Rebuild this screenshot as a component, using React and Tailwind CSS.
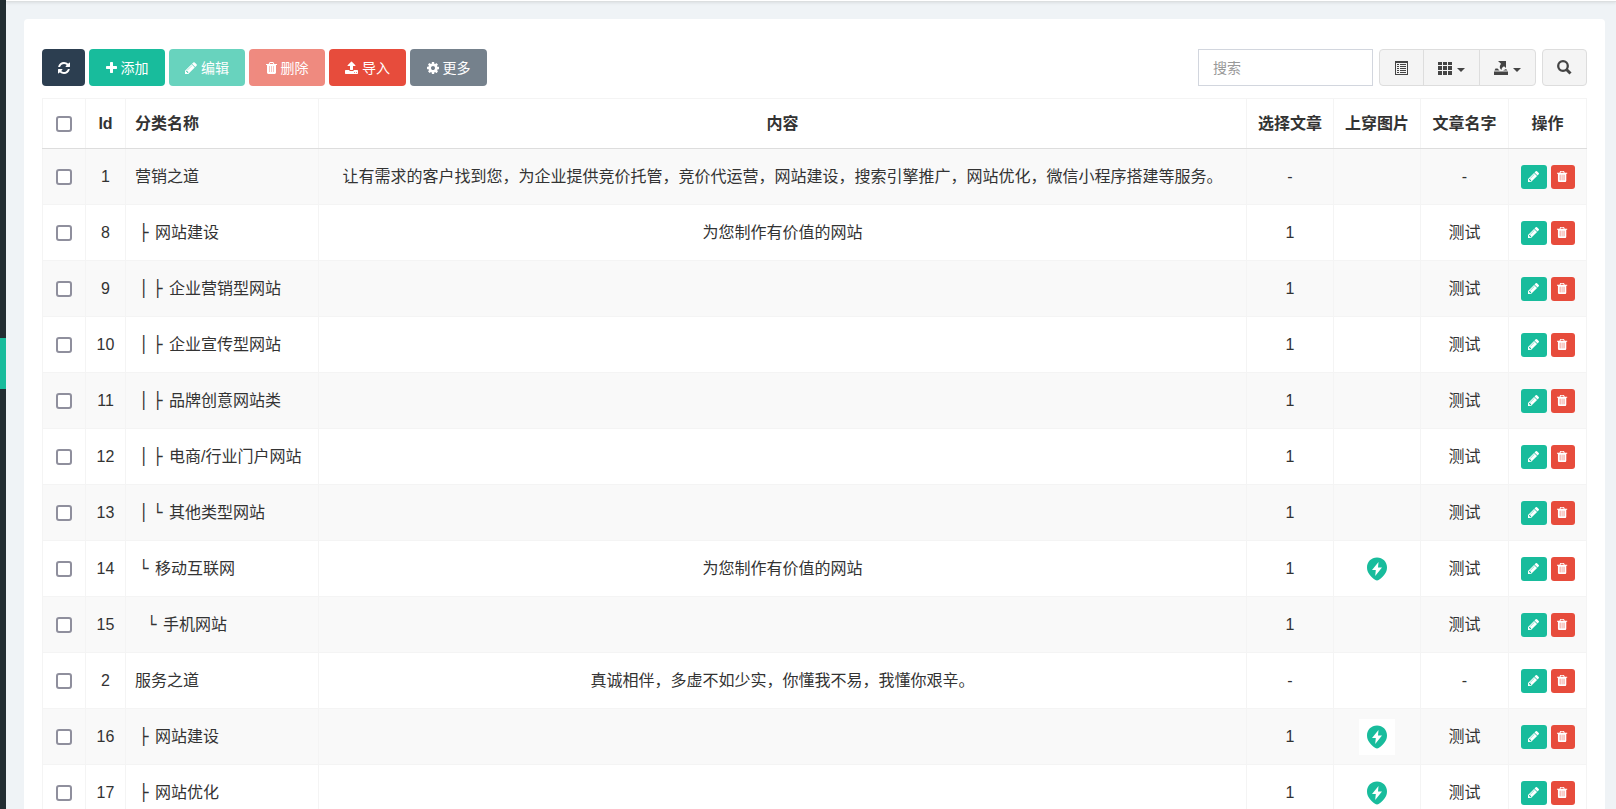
import React from 'react';

// [left edge, advance, path] on a 1792 unit grid
const icons = {
    refresh: [128, 1536, 'M1639 1056q0 5-1 7-64 268-268 434.5t-478 166.5q-146 0-282.5-55t-243.5-157l-129 129q-19 19-45 19t-45-19-19-45v-448q0-26 19-45t45-19h448q26 0 45 19t19 45-19 45l-137 137q71 66 161 102t187 36q134 0 250-65t186-179q11-17 53-117 8-23 30-23h192q13 0 22.5 9.5t9.5 22.5zm25-800v448q0 26-19 45t-45 19h-448q-26 0-45-19t-19-45 19-45l138-138q-148-137-349-137-134 0-250 65t-186 179q-11 17-53 117-8 23-30 23h-199q-13 0-22.5-9.5t-9.5-22.5v-7q65-268 270-434.5t480-166.5q146 0 284 55.5t245 156.5l130-129q19-19 45-19t45 19 19 45z'],
    plus: [192, 1408, 'M1600 736v192q0 40-28 68t-68 28h-416v416q0 40-28 68t-68 28h-192q-40 0-68-28t-28-68v-416h-416q-40 0-68-28t-28-68v-192q0-40 28-68t68-28h416v-416q0-40 28-68t68-28h192q40 0 68 28t28 68v416h416q40 0 68 28t28 68z'],
    pencil: [128, 1536, 'M491 1536l91-91-235-235-91 91v107h128v128h107zm523-928q0-22-22-22-10 0-17 7l-542 542q-7 7-7 17 0 22 22 22 10 0 17-7l542-542q7-7 7-17zm-54-192l416 416-832 832h-416v-416zm683 96q0 53-37 90l-166 166-416-416 166-165q36-38 90-38 53 0 91 38l235 234q37 39 37 91z'],
    trash: [192, 1408, 'M704 1376v-704q0-14-9-23t-23-9h-64q-14 0-23 9t-9 23v704q0 14 9 23t23 9h64q14 0 23-9t9-23zm256 0v-704q0-14-9-23t-23-9h-64q-14 0-23 9t-9 23v704q0 14 9 23t23 9h64q14 0 23-9t9-23zm256 0v-704q0-14-9-23t-23-9h-64q-14 0-23 9t-9 23v704q0 14 9 23t23 9h64q14 0 23-9t9-23zm-544-992h448l-48-117q-7-9-17-11h-317q-10 2-17 11zm928 32v64q0 14-9 23t-23 9h-96v948q0 83-47 143.5t-113 60.5h-832q-66 0-113-58.5t-47-141.5v-952h-96q-14 0-23-9t-9-23v-64q0-14 9-23t23-9h309l70-167q15-37 54-63t79-26h320q40 0 79 26t54 63l70 167h309q14 0 23 9t9 23z'],
    upload: [64, 1664, 'M1344 1472q0-26-19-45t-45-19-45 19-19 45 19 45 45 19 45-19 19-45zm256 0q0-26-19-45t-45-19-45 19-19 45 19 45 45 19 45-19 19-45zm128-224v320q0 40-28 68t-68 28h-1472q-40 0-68-28t-28-68v-320q0-40 28-68t68-28h427q21 56 70.5 92t110.5 36h256q61 0 110.5-36t70.5-92h427q40 0 68 28t28 68zm-325-648q-17 40-59 40h-256v448q0 26-19 45t-45 19h-256q-26 0-45-19t-19-45v-448h-256q-42 0-59-40-17-39 14-69l448-448q18-19 45-19t45 19l448 448q31 30 14 69z'],
    cog: [128, 1536, 'M1152 896q0-106-75-181t-181-75-181 75-75 181 75 181 181 75 181-75 75-181zm512-109v222q0 12-8 23t-20 13l-185 28q-19 54-39 91 35 50 107 138 10 12 10 25t-9 23q-27 37-99 108t-94 71q-12 0-26-9l-138-108q-44 23-91 38-16 136-29 186-7 28-36 28h-222q-14 0-24.5-8.5t-11.5-21.5l-28-184q-49-16-90-37l-141 107q-10 9-25 9-14 0-25-11-126-114-165-168-7-10-7-23 0-12 8-23 15-21 51-66.5t54-70.5q-27-50-41-99l-183-27q-13-2-21-12.5t-8-23.5v-222q0-12 8-23t19-13l186-28q14-46 39-92-40-57-107-138-10-12-10-24 0-10 9-23 26-36 98.5-107.5t94.5-71.5q13 0 26 10l138 107q44-23 91-38 16-136 29-186 7-28 36-28h222q14 0 24.5 8.5t11.5 21.5l28 184q49 16 90 37l142-107q9-9 24-9 13 0 25 10 129 119 165 170 7 8 7 22 0 12-8 23-15 21-51 66.5t-54 70.5q26 50 41 98l183 28q13 2 21 12.5t8 23.5z'],
};

function Icon({ name, className = 'h-[14px] w-auto' }) {
    const [left, width, d] = icons[name];
    return (
        <svg viewBox={`${left} 0 ${width} 1792`} fill="currentColor" className={className} aria-hidden="true">
            <path d={d} />
            {name === 'trash' && <path d="M560 620h672v810H560z" opacity=".5" />}
        </svg>
    );
}

function ListIcon() {
    return (
        <svg viewBox="0 0 14 14" className="size-[14px]" fill="currentColor" aria-hidden="true">
            <path fillRule="evenodd" d="M0 0h13v14H0zM1 2v11h11V2z" />
            <path d="M2 3h2v1H2zM5 3h6v1H5zM2 5h2v1H2zM5 5h6v1H5zM2 7h2v1H2zM5 7h6v1H5zM2 9h2v1H2zM5 9h6v1H5zM2 11h2v1H2zM5 11h6v1H5z" />
        </svg>
    );
}

function GridIcon() {
    return (
        <svg viewBox="0 0 14 14" className="size-[14px]" fill="currentColor" aria-hidden="true">
            <path d="M0 1h4v3H0zM5 1h4v3H5zM10 1h4v3h-4zM0 5h4v4H0zM5 5h4v4H5zM10 5h4v4h-4zM0 10h4v4H0zM5 10h4v4H5zM10 10h4v4h-4z" />
        </svg>
    );
}

function ExportIcon() {
    return (
        <svg viewBox="0 0 14 14" className="size-[14px]" fill="currentColor" aria-hidden="true">
            <path d="M4 0h8v7L10 5.200C8.500 6.200 7.500 7 7.500 9 5.500 7.500 5 5.500 7 2.800zM1.500 7.500h2l2 2H0.500zM9 9.500l3-1.500 1.500 1.500zM0 10.500h14V14H0z" />
        </svg>
    );
}

function SearchIcon() {
    return (
        <svg viewBox="0 0 15 15" className="size-[15px]" fill="none" stroke="currentColor" aria-hidden="true">
            <circle cx="6" cy="6" r="4.800" strokeWidth="2.300" />
            <path d="M9.500 9.500l4 4" strokeWidth="3" />
        </svg>
    );
}

function Caret() {
    return (
        <svg viewBox="0 0 8 4" className="mt-1 h-1 w-2" fill="currentColor" aria-hidden="true">
            <path d="M0 0h8L4 4z" />
        </svg>
    );
}

function BoltPin() {
    return (
        <svg viewBox="0 0 36 36" className="size-9" role="img" aria-label="图片">
            <path fill="#fff" d="M0 0h36v36H0z" />
            <path fill="#18bc9c" d="M18 6.500c5.700 0 10 4.300 10 9.700 0 5.300-3 8.800-8 12.600q-2 1.400-4 0C11 25 8 21.500 8 16.200c0-5.400 4.300-9.700 10-9.700z" />
            <path fill="#fff" d="M19.500 11L13 19h3.800L16.200 25 23 16.500h-4z" />
        </svg>
    );
}

const rows = [
    { id: 1, name: '营销之道', content: '让有需求的客户找到您，为企业提供竞价托管，竞价代运营，网站建设，搜索引擎推广，网站优化，微信小程序搭建等服务。', article: '-', title: '-' },
    { id: 8, tree: '├', name: '网站建设', content: '为您制作有价值的网站', article: '1', title: '测试' },
    { id: 9, tree: '│├', name: '企业营销型网站', article: '1', title: '测试' },
    { id: 10, tree: '│├', name: '企业宣传型网站', article: '1', title: '测试' },
    { id: 11, tree: '│├', name: '品牌创意网站类', article: '1', title: '测试' },
    { id: 12, tree: '│├', name: '电商/行业门户网站', article: '1', title: '测试' },
    { id: 13, tree: '│└', name: '其他类型网站', article: '1', title: '测试' },
    { id: 14, tree: '└', name: '移动互联网', content: '为您制作有价值的网站', article: '1', image: true, title: '测试' },
    { id: 15, tree: ' └', name: '手机网站', article: '1', title: '测试' },
    { id: 2, name: '服务之道', content: '真诚相伴，多虚不如少实，你懂我不易，我懂你艰辛。', article: '-', title: '-' },
    { id: 16, tree: '├', name: '网站建设', article: '1', image: true, title: '测试' },
    { id: 17, tree: '├', name: '网站优化', article: '1', image: true, title: '测试' },
];

const btn = 'flex h-[37px] cursor-pointer items-center justify-center gap-1 rounded-[4px] text-sm text-white';
const tool = 'flex h-[37px] cursor-pointer items-center justify-center gap-[5px] border border-[#ddd] bg-[#f4f4f4] text-[#444]';
const th = 'border border-[#f4f4f4] border-b-[#ddd] p-0 text-center font-bold';
const td = 'border border-[#f4f4f4] p-0 text-center';
const box = 'block mx-auto size-4 appearance-none rounded-[3px] border-2 border-[#8f8f9d] bg-white checked:bg-[#18bc9c]';

// one glyph per tree level, a blank level is only an indent
function Tree({ marks }) {
    return (
        <span className="flex pr-0.5 pl-1">
            {marks.split('').map((m, i) =>
                m === ' ' ? (
                    <span key={i} className="w-2" />
                ) : (
                    <span key={i} className="w-[14px] font-['DejaVu_Sans']">{m}</span>
                )
            )}
        </span>
    );
}

function Toolbar() {
    return (
        <div className="flex items-center justify-between pb-3">
            <div className="flex gap-1">
                <button aria-label="刷新" className={`${btn} w-[43px] bg-[#2c3e50]`}><Icon name="refresh" /></button>
                <button className={`${btn} w-[76px] bg-[#18bc9c]`}><Icon name="plus" />添加</button>
                <button className={`${btn} w-[76px] bg-[#18bc9c] opacity-65`}><Icon name="pencil" />编辑</button>
                <button className={`${btn} w-[76px] bg-[#e74c3c] opacity-65`}><Icon name="trash" />删除</button>
                <button className={`${btn} w-[77px] bg-[#e74c3c]`}><Icon name="upload" />导入</button>
                <button className={`${btn} w-[77px] bg-[#2c3e50] opacity-65`}><Icon name="cog" />更多</button>
            </div>
            <div className="flex gap-1.5">
                <input
                    type="text"
                    placeholder="搜索"
                    aria-label="搜索"
                    className="h-[37px] w-[175px] border border-[#d2d6de] bg-white px-[14px] text-sm text-[#555] outline-none placeholder:text-[#999]"
                />
                <div className="flex">
                    <button aria-label="切换" className={`${tool} w-[45px] rounded-l-[4px]`}><ListIcon /></button>
                    <button aria-label="列" className={`${tool} -ml-px w-[57px] rounded-none`}><GridIcon /><Caret /></button>
                    <button aria-label="导出" className={`${tool} -ml-px w-[57px] rounded-r-[4px]`}><ExportIcon /><Caret /></button>
                </div>
                <button aria-label="搜索" className={`${tool} w-[45px] rounded-[4px]`}><SearchIcon /></button>
            </div>
        </div>
    );
}

function App() {
    return (
        <div className="flex h-screen overflow-hidden bg-[#eff3f6] font-['Liberation_Sans','Noto_Sans_CJK_SC',sans-serif] text-base text-[#333]">
            <aside className="w-1.5 shrink-0 bg-[#222d32] pt-[338px]">
                <div className="h-[51px] bg-[#18bc9c]" />
            </aside>
            <div className="min-w-0 flex-1">
                <header className="h-0.5 border-b border-[#dcdfe0] bg-white shadow-sm" />
                <main className="mt-[17px] mr-[11px] ml-[18px] rounded-[4px] bg-white px-[18px] pt-[30px]">
                    <Toolbar />
                    <table className="w-full table-fixed border-collapse">
                        <thead>
                            <tr className="h-[50px]">
                                <th className={`${th} w-[43px]`}><input type="checkbox" aria-label="全选" className={box} /></th>
                                <th className={`${th} w-10`}>Id</th>
                                <th className={`${th} w-[193px]`}><div className="pl-[9px] text-left">分类名称</div></th>
                                <th className={th}>内容</th>
                                <th className={`${th} w-[87px]`}>选择文章</th>
                                <th className={`${th} w-[87px]`}>上穿图片</th>
                                <th className={`${th} w-[88px]`}>文章名字</th>
                                <th className={`${th} w-[78px]`}>操作</th>
                            </tr>
                        </thead>
                        <tbody>
                            {rows.map((row) => (
                                <tr key={row.id} className="h-14 odd:bg-[#f9f9f9]">
                                    <td className={td}><input type="checkbox" aria-label={`选择 ${row.id}`} className={box} /></td>
                                    <td className={td}>{row.id}</td>
                                    <td className={td}>
                                        <div className="flex pl-[9px] text-left whitespace-nowrap">
                                            {row.tree && <Tree marks={row.tree} />}
                                            {row.name}
                                        </div>
                                    </td>
                                    <td className={td}>{row.content}</td>
                                    <td className={td}>{row.article}</td>
                                    <td className={td}>
                                        {row.image && <div className="flex justify-center"><BoltPin /></div>}
                                    </td>
                                    <td className={td}>{row.title}</td>
                                    <td className={td}>
                                        <div className="flex justify-center gap-1">
                                            <button aria-label="编辑" className="flex h-6 w-[26px] cursor-pointer items-center justify-center rounded-[3px] bg-[#18bc9c] text-white">
                                                <Icon name="pencil" className="h-[13px] w-auto" />
                                            </button>
                                            <button aria-label="删除" className="flex h-6 w-6 cursor-pointer items-center justify-center rounded-[3px] bg-[#e74c3c] text-white">
                                                <Icon name="trash" className="h-[13px] w-auto" />
                                            </button>
                                        </div>
                                    </td>
                                </tr>
                            ))}
                        </tbody>
                    </table>
                </main>
            </div>
        </div>
    );
}

export default App;
